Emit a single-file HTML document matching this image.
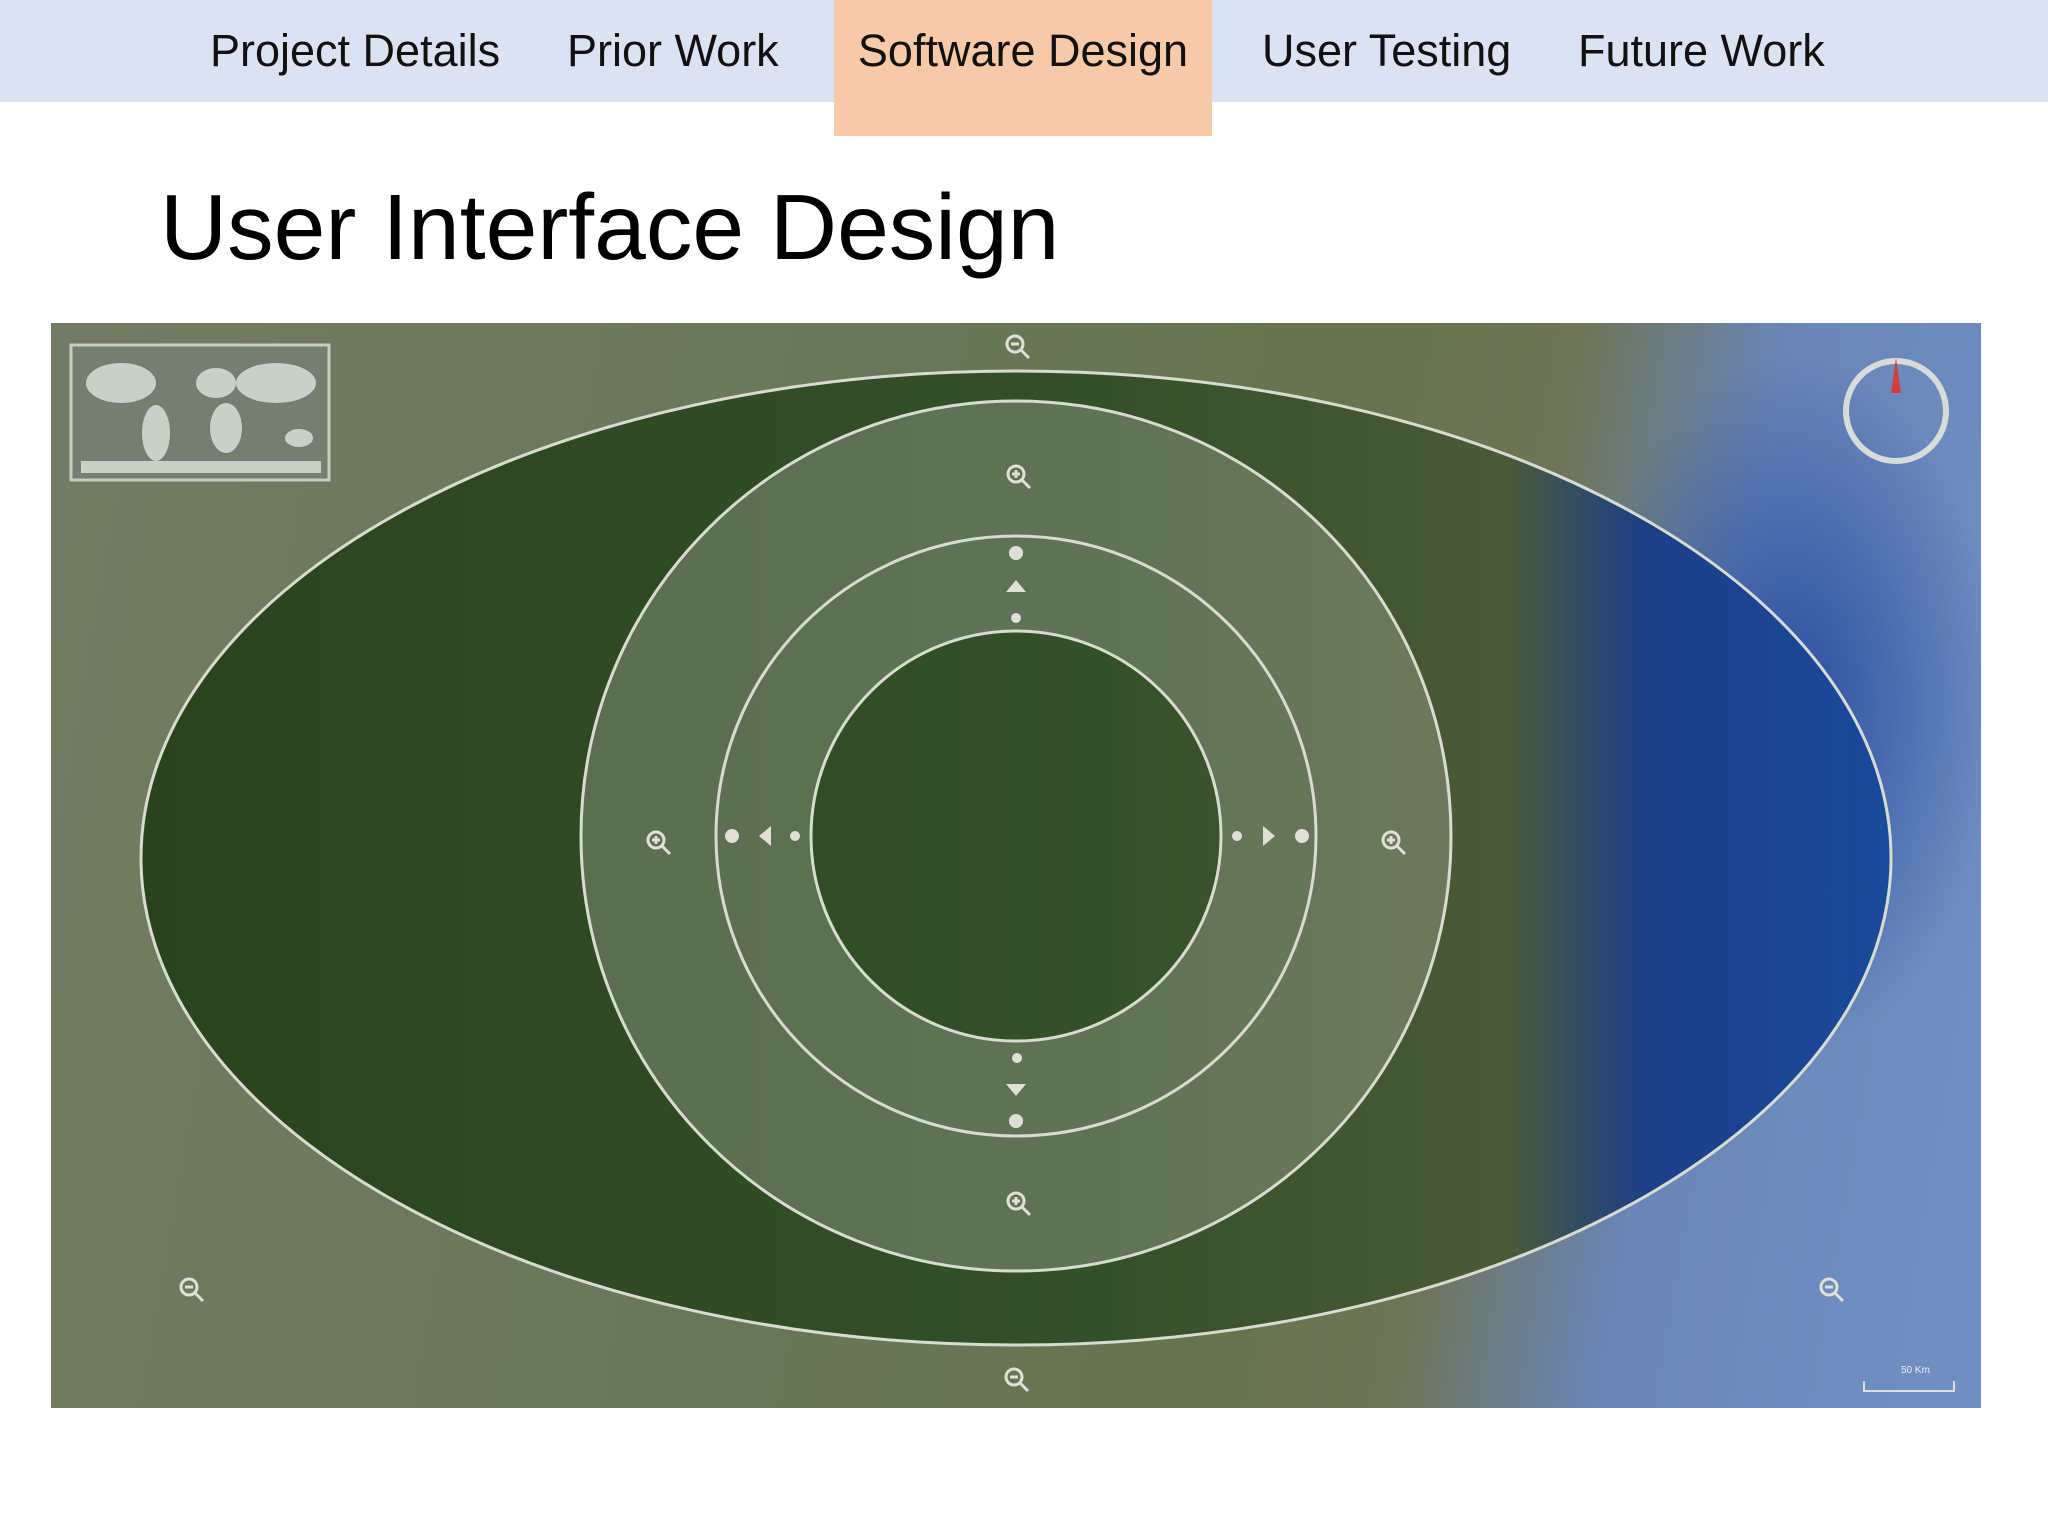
<!DOCTYPE html>
<html><head><meta charset="utf-8"><style>
html,body{margin:0;padding:0;background:#fff;width:2048px;height:1536px;overflow:hidden;font-family:"Liberation Sans",sans-serif}
.nav{position:absolute;left:0;top:0;width:2048px;height:102px;background:#dbe2f1}
.tab{position:absolute;top:0;height:102px;line-height:102px;font-size:45px;color:#111;white-space:nowrap}
.act{background:#f6c9a8;height:136px}
h1{position:absolute;left:160px;top:174px;margin:0;font-weight:normal;font-size:93px;color:#000}
.map{position:absolute;left:51px;top:323px;width:1930px;height:1085px;overflow:hidden;
background:
radial-gradient(ellipse 300px 500px at 1740px 380px,#2a4fa0 0%,rgba(42,79,160,0) 70%),
linear-gradient(100deg,#727c64 0%,#68775a 40%,#66744f 62%,#6e7456 72%,#6a86b8 82%,#7090c4 100%);}
</style></head><body>
<div class="nav"></div>
<div class="tab" style="left:210px">Project Details</div>
<div class="tab" style="left:567px">Prior Work</div>
<div class="tab act" style="left:834px;width:378px;text-align:center">Software Design</div>
<div class="tab" style="left:1262px">User Testing</div>
<div class="tab" style="left:1578px">Future Work</div>
<h1>User Interface Design</h1>
<div class="map">
<svg width="1930" height="1085" viewBox="0 0 1930 1085">
<defs>
<linearGradient id="eg" x1="0" x2="1"><stop offset="0" stop-color="#2a431f"/><stop offset="0.55" stop-color="#34502a"/><stop offset="0.78" stop-color="#4a5a38"/><stop offset="0.86" stop-color="#1d3f88"/><stop offset="1" stop-color="#1a4a9c"/></linearGradient>
</defs>
<ellipse cx="965" cy="535" rx="875" ry="487" fill="url(#eg)"/>
<path fill-rule="evenodd" fill="rgba(190,190,180,0.32)" d="M965,78a435,435 0 1,0 0.1,0Z M965,308a205,205 0 1,1 -0.1,0Z"/>
<ellipse cx="965" cy="535" rx="875" ry="487" fill="none" stroke="#d8dcd0" stroke-width="3"/>
<circle cx="965" cy="513" r="435" fill="none" stroke="#d8dcd0" stroke-width="3"/>
<circle cx="965" cy="513" r="300" fill="none" stroke="#d8dcd0" stroke-width="3"/>
<circle cx="965" cy="513" r="205" fill="none" stroke="#d8dcd0" stroke-width="3"/>
<g fill="#e0e0d8">
<circle cx="965" cy="230" r="7"/><path d="M955,269h20l-10,-12z"/><circle cx="965" cy="295" r="5"/>
<circle cx="965" cy="798" r="7"/><path d="M955,761h20l-10,12z"/><circle cx="966" cy="735" r="5"/>
<circle cx="681" cy="513" r="7"/><path d="M720,503v20l-12,-10z"/><circle cx="744" cy="513" r="5"/>
<circle cx="1251" cy="513" r="7"/><path d="M1212,503v20l12,-10z"/><circle cx="1186" cy="513" r="5"/>
</g>
<g fill="none" stroke="#e0e0d8" stroke-width="3">
<g transform="translate(964,21)"><circle r="8"/><path d="M6,6l8,8M-4,0h8"/></g>
<g transform="translate(965,151)"><circle r="8"/><path d="M6,6l8,8M-4,0h8M0,-4v8"/></g>
<g transform="translate(605,517)"><circle r="8"/><path d="M6,6l8,8M-4,0h8M0,-4v8"/></g>
<g transform="translate(1340,517)"><circle r="8"/><path d="M6,6l8,8M-4,0h8M0,-4v8"/></g>
<g transform="translate(965,878)"><circle r="8"/><path d="M6,6l8,8M-4,0h8M0,-4v8"/></g>
<g transform="translate(138,964)"><circle r="8"/><path d="M6,6l8,8M-4,0h8"/></g>
<g transform="translate(1778,964)"><circle r="8"/><path d="M6,6l8,8M-4,0h8"/></g>
<g transform="translate(963,1054)"><circle r="8"/><path d="M6,6l8,8M-4,0h8"/></g>
<circle cx="1845" cy="88" r="50" stroke="#d8dcd8" stroke-width="6"/>
<path d="M1813,1058v10h90v-10" stroke="#ddd" stroke-width="2"/>
</g>
<path d="M1845,35l5,35h-10z" fill="#d04040"/>
<rect x="20" y="22" width="258" height="135" fill="rgba(120,130,120,0.6)" stroke="#c8ccc4" stroke-width="3"/>
<g fill="#c8d0c8"><ellipse cx="70" cy="60" rx="35" ry="20"/><ellipse cx="105" cy="110" rx="14" ry="28"/><ellipse cx="165" cy="60" rx="20" ry="15"/><ellipse cx="175" cy="105" rx="16" ry="25"/><ellipse cx="225" cy="60" rx="40" ry="20"/><ellipse cx="248" cy="115" rx="14" ry="9"/><rect x="30" y="138" width="240" height="12"/></g>
<text x="1850" y="1050" font-size="10" fill="#eee" font-family="Liberation Sans">50 Km</text>
</svg>
</div>
</body></html>
